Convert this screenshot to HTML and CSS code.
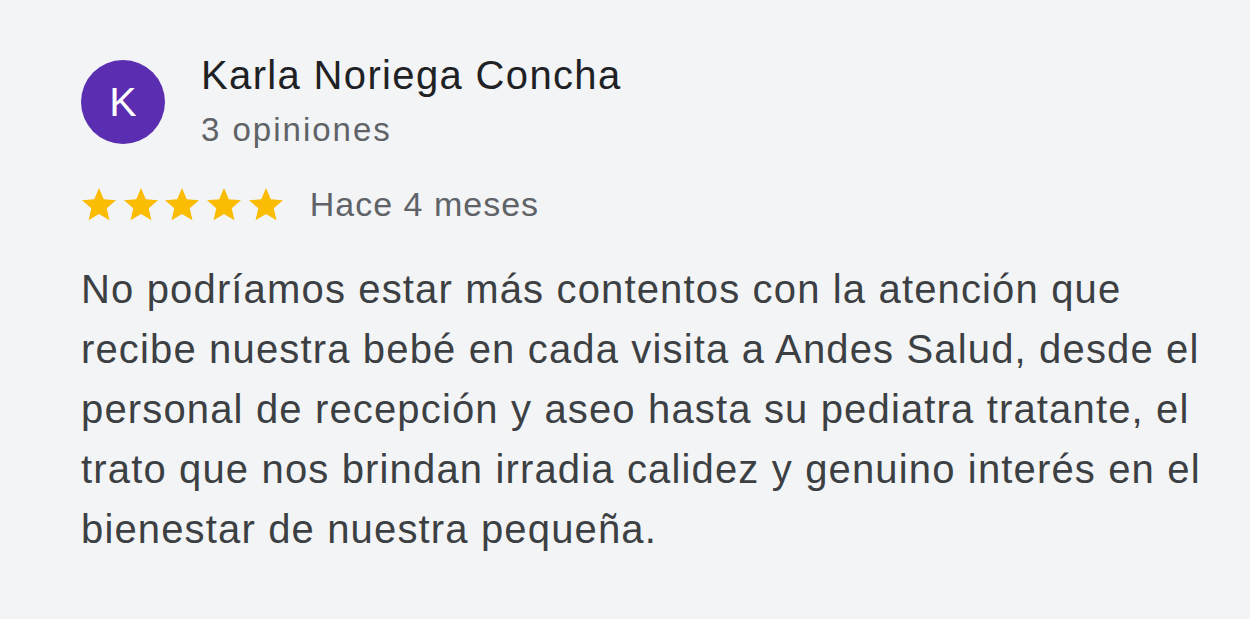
FILE: index.html
```html
<!DOCTYPE html>
<html lang="es">
<head>
    <meta charset="UTF-8">
    <meta name="viewport" content="width=device-width, initial-scale=1.0">
    <title>Opinión</title>
    <link rel="stylesheet" href="styles.css">
</head>
<body>
    <div class="review">
        <!-- autor -->
        <div class="review-header">
            <div class="avatar">K</div>
            <div class="author">
                <div class="author-name">Karla Noriega Concha</div>
                <div class="author-count">3 opiniones</div>
            </div>
        </div>

        <!-- estrellas y fecha -->
        <div class="rating-row">
            <div class="stars">
                <svg class="star" viewBox="2 2 20 19"><path d="M12 17.27L18.18 21l-1.64-7.03L22 9.24l-7.19-.61L12 2 9.19 8.63 2 9.24l5.46 4.73L5.82 21z"/></svg>
                <svg class="star" viewBox="2 2 20 19"><path d="M12 17.27L18.18 21l-1.64-7.03L22 9.24l-7.19-.61L12 2 9.19 8.63 2 9.24l5.46 4.73L5.82 21z"/></svg>
                <svg class="star" viewBox="2 2 20 19"><path d="M12 17.27L18.18 21l-1.64-7.03L22 9.24l-7.19-.61L12 2 9.19 8.63 2 9.24l5.46 4.73L5.82 21z"/></svg>
                <svg class="star" viewBox="2 2 20 19"><path d="M12 17.27L18.18 21l-1.64-7.03L22 9.24l-7.19-.61L12 2 9.19 8.63 2 9.24l5.46 4.73L5.82 21z"/></svg>
                <svg class="star" viewBox="2 2 20 19"><path d="M12 17.27L18.18 21l-1.64-7.03L22 9.24l-7.19-.61L12 2 9.19 8.63 2 9.24l5.46 4.73L5.82 21z"/></svg>
            </div>
            <span class="date">Hace 4 meses</span>
        </div>

        <!-- texto de la opinión -->
        <p class="review-text">No podríamos estar más contentos con la atención que recibe nuestra bebé en cada visita a Andes Salud, desde el personal de recepción y aseo hasta su pediatra tratante, el trato que nos brindan irradia calidez y genuino interés en el bienestar de nuestra pequeña.</p>
    </div>
</body>
</html>
```

FILE: styles.css
```css
* {
    box-sizing: border-box;
    margin: 0;
    padding: 0;
}

body {
    font-family: "Liberation Sans", Arial, sans-serif;
    background-color: #f3f4f6;
    width: 1250px;
    height: 619px;
    overflow: hidden;
}

.review {
    padding: 51px 20px 0 81px;
}

.review-header {
    display: flex;
    align-items: flex-start;
}

.avatar {
    width: 84px;
    height: 84px;
    margin-top: 9px;
    border-radius: 50%;
    background-color: #5a2db1;
    color: #fff;
    font-size: 41px;
    display: flex;
    justify-content: center;
    align-items: center;
    flex-shrink: 0;
}

.author {
    margin-left: 36px;
}

.author-name {
    font-size: 40px;
    line-height: 48px;
    letter-spacing: 1.35px;
    color: #202124;
}

.author-count {
    margin-top: 11px;
    font-size: 33px;
    line-height: 40px;
    letter-spacing: 2px;
    color: #5f6368;
}

.rating-row {
    display: flex;
    align-items: center;
    margin-top: 34px;
    height: 40px;
}

.stars {
    display: flex;
    gap: 7.7px;
    margin-left: 1px;
}

.star {
    width: 34px;
    height: 32.3px;
    fill: #fbbc04;
}

.date {
    margin-left: 27px;
    font-size: 34px;
    line-height: 40px;
    letter-spacing: 1px;
    color: #5f6368;
}

.review-text {
    margin-top: 35px;
    font-size: 40px;
    line-height: 60px;
    letter-spacing: 1.15px;
    color: #3c4043;
}
```
